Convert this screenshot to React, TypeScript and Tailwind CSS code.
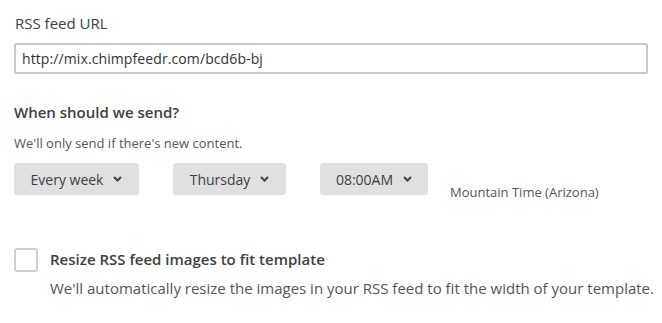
import React from 'react';

const Chevron: React.FC = () => (
  <svg width="9" height="6" viewBox="0 0 9 6" className="shrink-0">
    <path d="M1 1l3.5 3.5L8 1" fill="none" stroke="#404040" strokeWidth="2" />
  </svg>
);

const SelectButton: React.FC<{ label: string; width: string }> = ({ label, width }) => (
  <button
    type="button"
    className={`flex h-[32px] items-center justify-center gap-[10px] rounded-[3px] bg-[#e0e0e0] text-[14px] text-[#404040] ${width}`}
  >
    <span>{label}</span>
    <Chevron />
  </button>
);

export default function App() {
  return (
    <div
      className="h-[323px] w-[662px] bg-white pl-[14px] pt-[12px] text-[#404040]"
      style={{ fontFamily: '"Open Sans", "Noto Sans", sans-serif' }}
    >
      {/* RSS url */}
      <label className="block pl-px text-[15px] leading-[22px]">RSS feed URL</label>
      <input
        type="text"
        defaultValue="http://mix.chimpfeedr.com/bcd6b-bj"
        className="mt-[9px] block h-[31px] w-[634px] rounded-[2px] border-2 border-[#c8c8c8] px-[6px] text-[14px] tracking-[0.1px] text-[#333] outline-none"
      />

      {/* Schedule */}
      <h3 className="mt-[28px] text-[15px] font-semibold leading-[20px]">When should we send?</h3>
      <p className="mt-[12px] text-[13px] leading-[18px] text-[#555]">We'll only send if there's new content.</p>
      <div className="mt-[11px] flex items-start">
        <SelectButton label="Every week" width="w-[125px]" />
        <div className="ml-[34px]">
          <SelectButton label="Thursday" width="w-[113px]" />
        </div>
        <div className="ml-[34px]">
          <SelectButton label="08:00AM" width="w-[108px]" />
        </div>
        <span className="ml-[22px] mt-[20px] text-[13px] leading-[18px] text-[#555]">Mountain Time (Arizona)</span>
      </div>

      {/* Resize option */}
      <div className="mt-[47px] flex items-start gap-[12px]">
        <span className="block h-[24px] w-[24px] shrink-0 rounded-[3px] border-2 border-[#cfcfcf] bg-white" />
        <div>
          <div className="text-[15px] font-semibold leading-[22px]">Resize RSS feed images to fit template</div>
          <p className="mt-[8px] text-[15px] leading-[20px] text-[#555]">
            We'll automatically resize the images in your RSS feed to fit the width of your template.
          </p>
        </div>
      </div>
    </div>
  );
}
